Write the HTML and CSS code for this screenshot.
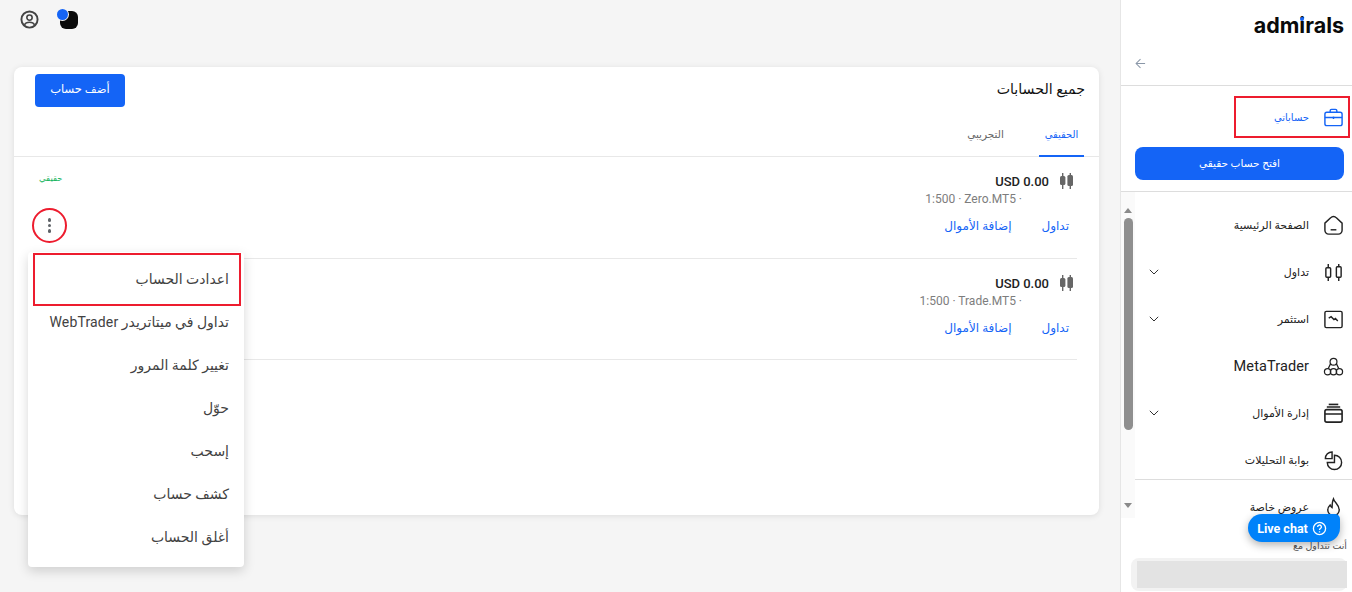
FILE: index.html
```html
<!DOCTYPE html>
<html lang="ar">
<head>
<meta charset="utf-8">
<title>جميع الحسابات</title>
<link rel="stylesheet" href="styles.css">
</head>
<body>
<div class="app">
  <main class="main">
    <div class="topbar">
      <svg class="ico-user" viewBox="0 0 20 20" fill="none" stroke="#444" stroke-width="2"><circle cx="10" cy="10" r="8.500"/><circle cx="10" cy="8" r="2.800" stroke-width="1.700"/><path d="M4.600 15.600c1-2 3-2.700 5.400-2.700s4.400.7 5.400 2.700" stroke-width="1.600"/></svg>
      <span class="mode"><span class="mode-dot"></span></span>
    </div>
    <section class="card" dir="rtl">
      <header class="card-head">
        <h1 class="card-title">جميع الحسابات</h1>
        <button class="add-btn">أضف حساب</button>
      </header>
      <nav class="tabs">
        <span class="tab active">الحقيقي</span>
        <span class="tab">التجريبي</span>
      </nav>
      <article class="acct">
        <div class="acct-info">
          <div class="amount-line">
            <svg class="candle" viewBox="0 0 13 16" fill="#666"><rect x="2" y="0" width="1.400" height="16"/><rect x="0" y="3" width="5.400" height="9" rx="1.500"/><rect x="9.600" y="0" width="1.400" height="16"/><rect x="7.400" y="2" width="5.600" height="11" rx="1.500"/></svg>
            <span class="amount" dir="ltr">USD 0.00</span>
          </div>
          <div class="meta" dir="ltr">1:500 · Zero.MT5 ·</div>
          <div class="links"><a>تداول</a><a>إضافة الأموال</a></div>
        </div>
        <div class="acct-side">
          <span class="badge">حقيقي</span>
          <button class="kebab ringed"><i></i><i></i><i></i></button>
        </div>
      </article>
      <article class="acct">
        <div class="acct-info">
          <div class="amount-line">
            <svg class="candle" viewBox="0 0 13 16" fill="#666"><rect x="2" y="0" width="1.400" height="16"/><rect x="0" y="3" width="5.400" height="9" rx="1.500"/><rect x="9.600" y="0" width="1.400" height="16"/><rect x="7.400" y="2" width="5.600" height="11" rx="1.500"/></svg>
            <span class="amount" dir="ltr">USD 0.00</span>
          </div>
          <div class="meta" dir="ltr">1:500 · Trade.MT5 ·</div>
          <div class="links"><a>تداول</a><a>إضافة الأموال</a></div>
        </div>
      </article>
    </section>
  </main>

  <aside class="side" dir="rtl">
    <div class="logo-row"><span class="logo" dir="ltr">adm<span class="logo-i">i</span>rals</span></div>
    <div class="back-row">
      <svg class="back" viewBox="0 0 12 12" fill="none" stroke="#8a97a8" stroke-width="1.100"><path d="M11 6H1.500M6 1.200 1.200 6 6 10.800"/></svg>
    </div>
    <div class="mine-row">
      <a class="mine">
        <svg class="nav-ico" viewBox="0 0 22 22" fill="none" stroke="#1464f6" stroke-width="1.500"><rect x="2" y="5.500" width="18" height="14" rx="2"/><path d="M7.500 5.500V4a1.500 1.500 0 0 1 1.500-1.500h4A1.500 1.500 0 0 1 14.500 4v1.500M2 11h18M11 10v2.500"/></svg>
        <span>حساباتي</span>
      </a>
    </div>
    <button class="open-btn">افتح حساب حقيقي</button>
    <div class="nav-wrap">
      <div class="bar" dir="ltr"><span class="up"></span><span class="thumb"></span><span class="down"></span></div>
      <ul class="nav">
        <li><svg class="nav-ico" viewBox="0 0 22 22" fill="none" stroke="#222" stroke-width="1.500"><path d="M2 8.500 8 3a4 4 0 0 1 6 0l6 5.500V16a4 4 0 0 1-4 4H6a4 4 0 0 1-4-4z"/><path d="M8 15.500h6"/></svg><span>الصفحة الرئيسية</span></li>
        <li><svg class="nav-ico" viewBox="0 0 22 22" fill="none" stroke="#222" stroke-width="1.500"><rect x="3" y="6" width="5" height="10" rx="1"/><rect x="14" y="5" width="5" height="11" rx="1"/><path d="M5.500 2v4M5.500 16v4M16.500 2v3M16.500 16v4"/></svg><span>تداول</span><svg class="chev" viewBox="0 0 10 6" fill="none" stroke="#333" stroke-width="1"><path d="M.8.800 5 5l4.200-4.200"/></svg></li>
        <li><svg class="nav-ico" viewBox="0 0 22 22" fill="none" stroke="#222" stroke-width="1.500"><rect x="2" y="2.500" width="18" height="17" rx="1.500"/><path d="M6 9.500l2.500-1.500 3 3 1.500-1 2.500 2.500"/></svg><span>استثمر</span><svg class="chev" viewBox="0 0 10 6" fill="none" stroke="#333" stroke-width="1"><path d="M.8.800 5 5l4.200-4.200"/></svg></li>
        <li><svg class="nav-ico" viewBox="0 0 22 22" fill="none" stroke="#222" stroke-width="1.300"><circle cx="11" cy="6" r="3.600"/><circle cx="4.800" cy="16.500" r="3.300"/><circle cx="17.200" cy="16.500" r="3.300"/><circle cx="11" cy="16.500" r="3.300"/><path d="M8 8 5.500 13.200M14 8l2.500 5.200"/></svg><span class="latin">MetaTrader</span></li>
        <li><svg class="nav-ico" viewBox="0 0 22 22" fill="none" stroke="#222" stroke-width="1.700"><rect x="2" y="7" width="18" height="13" rx="2"/><path d="M4 4.200h14M2 11.500h18"/><path d="M6 1.500h10"/></svg><span>إدارة الأموال</span><svg class="chev" viewBox="0 0 10 6" fill="none" stroke="#333" stroke-width="1"><path d="M.8.800 5 5l4.200-4.200"/></svg></li>
        <li><svg class="nav-ico" viewBox="0 0 22 22" fill="none" stroke="#222" stroke-width="1.500"><path d="M12 5.500a7.500 7.500 0 1 1-7.500 7.500H12z"/><path d="M9.500 9V2a7 7 0 0 0-7 7z"/></svg><span>بوابة التحليلات</span></li>
        <li class="offer"><svg class="nav-ico" viewBox="0 0 22 22" fill="none" stroke="#222" stroke-width="1.500"><path d="M11 2c1 4 6 6 6 11.500A6 6 0 0 1 5 13.500c0-2.500 1.500-4 2.500-5 .5 1.500 1 2.200 2 2.700C9.500 8 9.500 5 11 2z"/></svg><span>عروض خاصة</span></li>
      </ul>
    </div>
    <div class="foot">
      <p class="foot-text">أنت تتداول مع</p>
      <div class="foot-box"><div class="foot-fill"></div></div>
    </div>
  </aside>
</div>

<div class="menu" dir="rtl">
  <a class="menu-item">اعدادت الحساب</a>
  <a class="menu-item">تداول في ميتاتريدر WebTrader</a>
  <a class="menu-item">تغيير كلمة المرور</a>
  <a class="menu-item">حوّل</a>
  <a class="menu-item">إسحب</a>
  <a class="menu-item">كشف حساب</a>
  <a class="menu-item">أغلق الحساب</a>
</div>
<div class="mark"></div>

<button class="chat">Live chat
  <svg viewBox="0 0 16 16" fill="none" stroke="#fff" stroke-width="1.400"><circle cx="8" cy="8" r="6.500"/><path d="M6 6.300a2 2 0 1 1 3 1.700c-.7.400-1 .8-1 1.500"/><path d="M8 11v1.200"/></svg>
</button>
</body>
</html>
```
FILE: styles.css
```css
* { box-sizing: border-box; }
html, body { margin: 0; height: 100%; overflow: hidden; }
body { font-family: Roboto, "DejaVu Sans", sans-serif; font-size: 12px; color: #222; background: #f5f5f5; position: relative; }
button { font-family: inherit; border: 0; cursor: pointer; }

.app { display: flex; height: 592px; }
.main { width: 1120px; flex: none; padding: 0 21px 0 14px; }

.topbar { height: 67px; display: flex; align-items: flex-start; gap: 21px; padding: 10px 0 0 6px; }
.ico-user { width: 19px; height: 19px; }
.mode { width: 18px; height: 18px; background: #0a0a0a; border-radius: 6px; position: relative; margin-top: 1px; }
.mode-dot { position: absolute; left: -3px; top: -2px; width: 11px; height: 11px; border-radius: 50%; background: #1464f6; box-shadow: 0 0 0 1px #f5f5f5; }

.card { background: #fff; height: 448px; border-radius: 8px; box-shadow: 0 1px 6px rgba(0,0,0,.1); }
.card-head { display: flex; justify-content: space-between; align-items: flex-start; height: 55px; padding: 7px 14px 0 21px; margin: 0; }
.card-title { font-size: 14.200px; font-weight: 400; margin: 5px 0 0; line-height: 20px; color: #111; }
.add-btn { width: 90px; height: 33px; background: #1464f6; color: #fff; border-radius: 4px; font-size: 11.500px; padding-bottom: 4px; }

.tabs { display: flex; height: 35px; padding-right: 15px; border-bottom: 1px solid #e8e8e8; gap: 31px; }
.tab { width: 45px; height: 35px; line-height: 26px; text-align: center; font-size: 10.500px; color: #666; flex: none; white-space: nowrap; }
.tab.active { color: #1464f6; border-bottom: 2px solid #1464f6; font-size: 10px; }

.acct { display: flex; justify-content: space-between; height: 102px; margin: 0 22px 0 21px; padding: 16px 4px 0 0; border-bottom: 1px solid #e8e8e8; }
.acct + .acct { height: 101px; }
.acct-info { display: flex; flex-direction: column; }
.amount-line { display: flex; align-items: center; gap: 11px; height: 16px; }
.candle { width: 13px; height: 16px; }
.amount { font-size: 13px; font-weight: 500; color: #222; }
.meta { font-size: 12px; color: #7d7d7d; margin: 3px 51px 0 0; line-height: 14px; text-align: right; }
.links { display: flex; gap: 30px; margin: 12px 4px 0 0; font-size: 12px; color: #1464f6; line-height: 16px; }

.acct-side { display: flex; flex-direction: column; width: 35px; margin-left: -3px; }
.badge { color: #0eb35a; font-size: 8.500px; line-height: 12px; margin-top: -1px; align-self: flex-end; padding-left: 7px; }
.kebab { width: 35px; height: 35px; margin-top: 24px; background: #fff; border-radius: 50%; display: flex; flex-direction: column; align-items: center; justify-content: center; gap: 2px; padding: 0; }
.kebab i { width: 3.500px; height: 3.500px; border-radius: 50%; background: #5f6368; }
.ringed { border: 2px solid #ed1c2e; }

.side { width: 232px; flex: none; background: #fff; border-left: 1px solid #e6e6e6; display: flex; flex-direction: column; height: 592px; }
.logo-row { height: 47px; display: flex; justify-content: flex-start; padding: 10px 8px 0 0; }
.logo { font-family: Inter, sans-serif; font-weight: 700; font-size: 21.500px; line-height: 30px; color: #0a0a0a; }
.logo-i { position: relative; }
.logo-i::after { content: ""; position: absolute; left: 50%; top: 5px; margin-left: -2px; width: 4px; height: 4px; border-radius: 50%; background: #1464f6; }
.back-row { height: 39px; border-bottom: 1px solid #ddd; display: flex; justify-content: flex-end; padding: 11px 0 0 14px; }
.back { width: 11px; height: 11px; }

.mine-row { height: 61px; display: flex; padding: 10px 2px 0 0; }
.mine { width: 116px; height: 42px; border: 2px solid #ed1c2e; display: flex; align-items: center; gap: 14px; padding-right: 4px; font-size: 10px; color: #1464f6; }
.nav-ico { width: 21px; height: 21px; flex: none; }
.open-btn { width: 209px; height: 33px; margin: 0 8px 0 0; background: #1464f6; color: #fff; border-radius: 8px; font-size: 10.500px; flex: none; }

.nav-wrap { height: 327px; margin-top: 11px; border-top: 1px solid #ddd; display: flex; overflow: hidden; flex: none; }
.nav { list-style: none; margin: 0; padding: 0; flex: 1; }
.nav li { height: 47px; display: flex; align-items: center; gap: 14px; position: relative; font-size: 11px; color: #222; padding: 19px 8px 0 0; }
.nav li.offer { border-top: 1px solid #ddd; margin-top: 5px; height: 48px; padding-top: 8px; }
.latin { font-size: 14.500px; letter-spacing: .1px; }
.chev { position: absolute; left: 14px; width: 10px; height: 6px; top: 30px; }

.bar { order: 2; width: 14px; flex: none; background: #fafafa; display: flex; flex-direction: column; align-items: center; }
.up { width: 0; height: 0; border: 4px solid transparent; border-top: 0; border-bottom: 5px solid #8a8a8a; margin-top: 16px; }
.thumb { width: 9px; height: 212px; flex: none; background: #8f8f8f; border-radius: 5px; margin-top: 5px; }
.down { width: 0; height: 0; border: 4px solid transparent; border-bottom: 0; border-top: 5px solid #8a8a8a; margin-top: 73px; }

.foot { padding: 22px 5px 0 4px; flex: none; }
.foot-text { margin: 0 0 6px; font-size: 9.500px; color: #555; line-height: 12px; }
.foot-box { background: #f2f2f2; border-radius: 8px; padding: 3px 0 3px 6px; margin-left: 6px; height: 33px; }
.foot-fill { background: #e3e3e3; height: 27px; }

.menu { position: absolute; left: 28px; top: 252px; width: 216px; background: #fff; border-radius: 4px; padding: 6px 0 8px; box-shadow: 0 4px 12px rgba(0,0,0,.16); }
.menu-item { display: block; height: 43px; line-height: 43px; padding: 0 15px 0 0; font-size: 14px; letter-spacing: .15px; color: #424242; white-space: nowrap; }
.mark { position: absolute; left: 33px; top: 253px; width: 208px; height: 53px; border: 2px solid #ed1c2e; }

.chat { position: absolute; left: 1248px; top: 514px; width: 92px; height: 28px; border-radius: 14px 5px 14px 14px; background: #0082fa; color: #fff; font-size: 12.500px; font-weight: 700; display: flex; align-items: center; justify-content: center; gap: 4px; padding: 0 4px 0 0; box-shadow: 0 3px 8px rgba(0,0,0,.3); }
.chat svg { width: 15px; height: 15px; }
```
